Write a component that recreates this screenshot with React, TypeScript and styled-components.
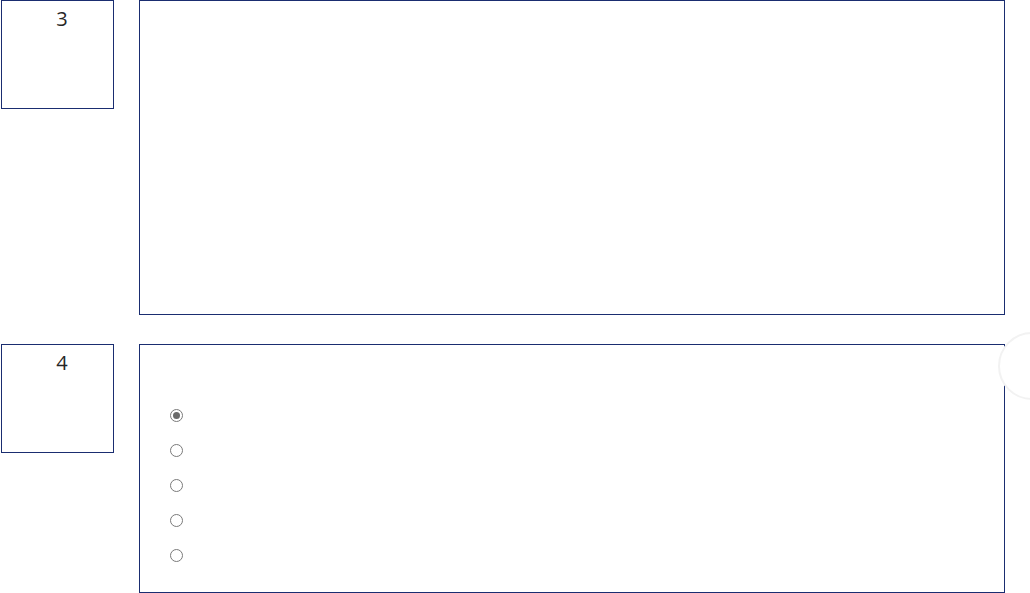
import React from 'react';
import styled, { createGlobalStyle } from 'styled-components';

const GlobalStyle = createGlobalStyle`
  html, body {
    margin: 0;
    padding: 0;
    background: #ffffff;
    font-family: "Open Sans", "Noto Sans", sans-serif;
    color: #333333;
    overflow: hidden;
  }
`;

const Page = styled.div`
  display: flex;
  flex-direction: column;
  gap: 29px;
  padding-left: 1px;
  width: 1004px;
`;

const QuestionRow = styled.div`
  display: flex;
  align-items: flex-start;
  gap: 25px;
`;

const NumberBox = styled.div`
  box-sizing: border-box;
  width: 113px;
  height: 109px;
  border: 1px solid #1a2d70;
  padding: 6px 0 0 9px;
  text-align: center;
  font-size: 20px;
  line-height: 24px;
  color: #262626;
`;

const AnswerBox = styled.div<{ $height: number }>`
  box-sizing: border-box;
  flex: 1;
  height: ${({ $height }) => $height}px;
  border: 1px solid #1a2d70;
`;

const OptionList = styled.div`
  display: flex;
  flex-direction: column;
  padding: 53px 0 0 30px;
`;

const Option = styled.label`
  display: flex;
  align-items: center;
  height: 35px;
  font-size: 14px;
  color: #333333;
`;

const Radio = styled.input.attrs({ type: 'radio' })`
  appearance: none;
  box-sizing: border-box;
  margin: 0;
  width: 13px;
  height: 13px;
  border: 1px solid #7a7a7a;
  border-radius: 50%;
  background: #ffffff;
  position: relative;

  &:checked::after {
    content: '';
    position: absolute;
    left: 2px;
    top: 2px;
    width: 7px;
    height: 7px;
    border-radius: 50%;
    background: #6a6a6a;
  }
`;

const FloatingButton = styled.div`
  position: fixed;
  top: 332px;
  left: 998px;
  width: 68px;
  height: 68px;
  box-sizing: border-box;
  border-radius: 50%;
  border: 2px solid #f2f2f2;
  background: #ffffff;
`;

const options = ['a', 'b', 'c', 'd', 'e'];

export default function App() {
  return (
    <>
      <GlobalStyle />
      <Page>
        <QuestionRow>
          <NumberBox>3</NumberBox>
          <AnswerBox $height={315} />
        </QuestionRow>
        <QuestionRow>
          <NumberBox>4</NumberBox>
          <AnswerBox $height={249}>
            <OptionList>
              {options.map((o, i) => (
                <Option key={o}>
                  <Radio name="q4" value={o} defaultChecked={i === 0} disabled />
                </Option>
              ))}
            </OptionList>
          </AnswerBox>
        </QuestionRow>
      </Page>
      <FloatingButton />
    </>
  );
}
